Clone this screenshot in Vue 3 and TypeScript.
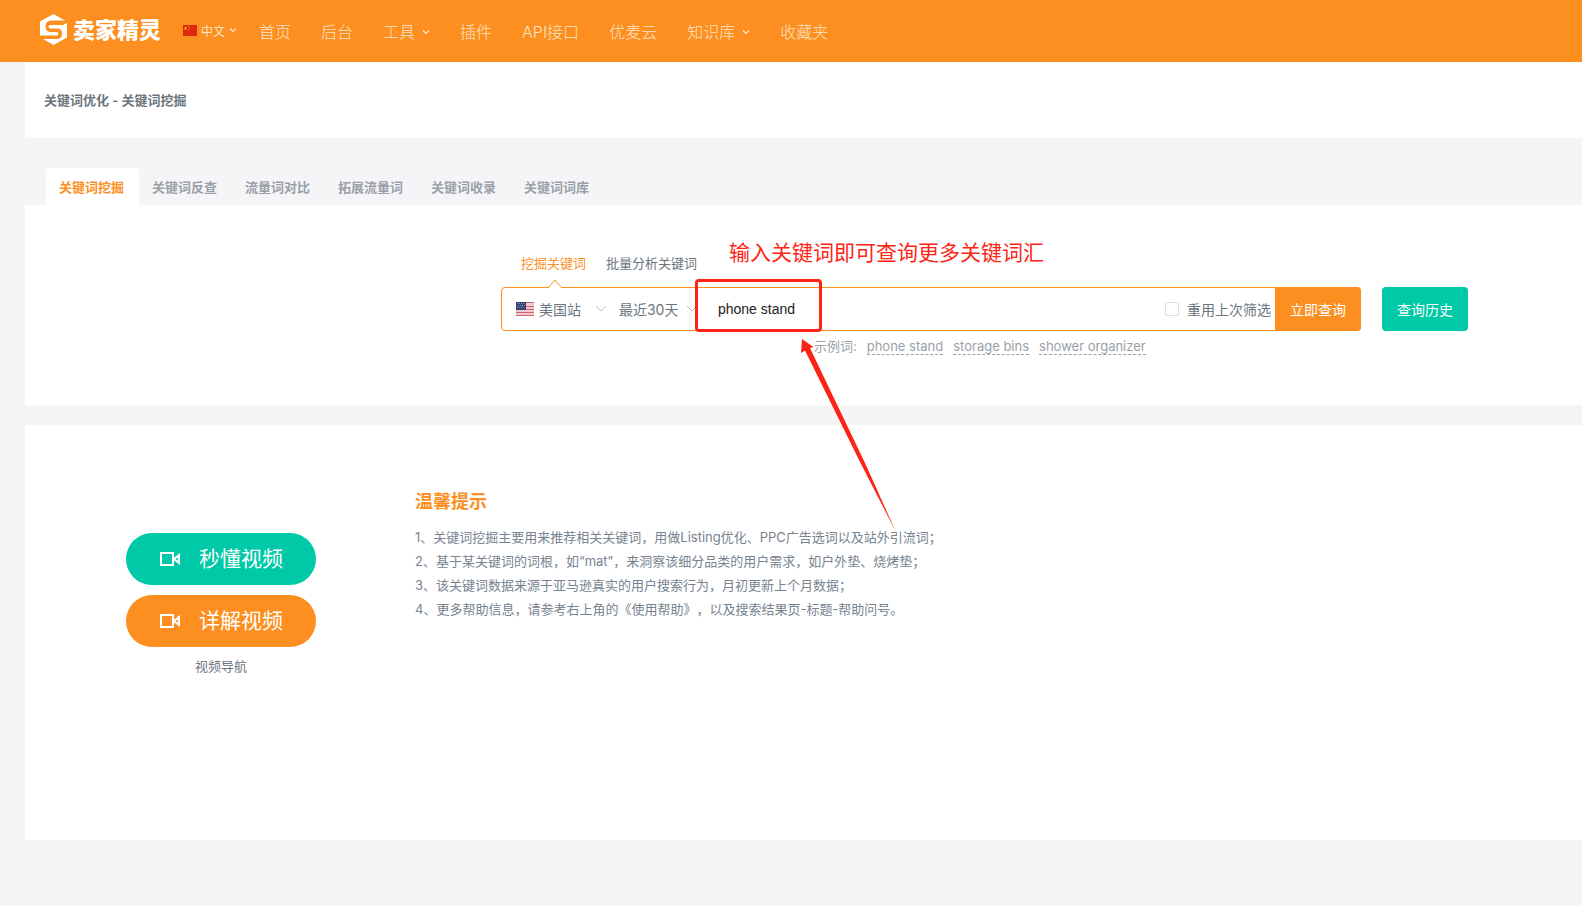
<script setup lang="ts">
import { ref } from 'vue'

interface NavItem {
  label: string
  menu?: boolean
}

const navItems: NavItem[] = [
  { label: '首页' },
  { label: '后台' },
  { label: '工具', menu: true },
  { label: '插件' },
  { label: 'API接口' },
  { label: '优麦云' },
  { label: '知识库', menu: true },
  { label: '收藏夹' },
]

const tabs: string[] = ['关键词挖掘', '关键词反查', '流量词对比', '拓展流量词', '关键词收录', '关键词词库']
const activeTab = ref(0)

const modes: string[] = ['挖掘关键词', '批量分析关键词']
const activeMode = ref(0)

const site = ref('美国站')
const period = ref('最近30天')
const keyword = ref('phone stand')
const reuse = ref(false)

const examples: string[] = ['phone stand', 'storage bins', 'shower organizer']

const tips: string[] = [
  '1、关键词挖掘主要用来推荐相关关键词，用做Listing优化、PPC广告选词以及站外引流词；',
  '2、基于某关键词的词根，如“mat”，来洞察该细分品类的用户需求，如户外垫、烧烤垫；',
  '3、该关键词数据来源于亚马逊真实的用户搜索行为，月初更新上个月数据；',
  '4、更多帮助信息，请参考右上角的《使用帮助》，以及搜索结果页-标题-帮助问号。',
]

const videos = [
  { label: '秒懂视频', tone: 'green' },
  { label: '详解视频', tone: 'orange' },
]
</script>

<template>
  <div class="page">
    <header class="topbar">
      <a class="brand" href="#">
        <svg class="brand-mark" viewBox="0 0 27 31" aria-hidden="true">
          <path d="M13.500 0L25 6.500H12Q5.500 6.500 5.500 12.500T12 18H16.500Q18.500 18 18.500 19.700T16.500 21.500H0V7.500Z" fill="#fff" />
          <path d="M27 9V23.500L13.500 31L3 25H16Q22 25 22 19.500T16 14.500H10.500Q8.500 14.500 8.500 12.700T10.500 11H23Z" fill="#fff" />
        </svg>
        <span class="brand-name">卖家精灵</span>
      </a>
      <button class="lang" type="button">
        <svg class="flag-cn" viewBox="0 0 14 11" aria-hidden="true">
          <rect width="14" height="11" fill="#de2910" />
          <path d="M2.500 1.500l.5 1.200h1.200l-1 .8.4 1.200-1.100-.7-1.100.7.4-1.200-1-.8H2z" fill="#ffde00" />
          <path d="M5 1h1v1H5zM6 2.500h1v1H6zM5 4.500h1v1H5z" fill="#f08a10" />
        </svg>
        <span>中文</span>
        <svg class="caret" viewBox="0 0 8 6" aria-hidden="true"><path d="M1 1.500l3 3 3-3" /></svg>
      </button>
      <nav class="nav">
        <a v-for="item in navItems" :key="item.label" href="#">
          {{ item.label }}
          <svg v-if="item.menu" class="caret" viewBox="0 0 8 6" aria-hidden="true"><path d="M1 1.500l3 3 3-3" /></svg>
        </a>
      </nav>
    </header>

    <main class="content">
      <h1 class="crumb">关键词优化 - 关键词挖掘</h1>

      <div class="tabs" role="tablist">
        <button
          v-for="(tab, i) in tabs"
          :key="tab"
          type="button"
          role="tab"
          :aria-selected="i === activeTab"
          :class="{ active: i === activeTab }"
          @click="activeTab = i"
        >{{ tab }}</button>
      </div>

      <section class="search-panel">
        <div class="modes">
          <button
            v-for="(mode, i) in modes"
            :key="mode"
            type="button"
            :class="{ active: i === activeMode }"
            @click="activeMode = i"
          >{{ mode }}</button>
        </div>
        <form class="search-row" @submit.prevent>
          <div class="search-box">
            <svg class="notch" viewBox="0 0 16 9" aria-hidden="true">
              <path d="M1 9L8 1l7 8" fill="#fff" stroke="#fc8f1f" />
            </svg>
            <svg class="flag-us" viewBox="0 0 18 14" aria-hidden="true">
              <rect width="18" height="14" fill="#f0c9d0" />
              <path d="M0 .5h18M0 4.500h18M0 7.500h18M0 10.500h18M0 13.500h18" stroke="#cf6471" />
              <rect width="10" height="8" fill="#34426f" />
              <path d="M1 1.500h8M2 3.500h8M1 5.500h8" stroke="#8790ae" stroke-dasharray="1 1" />
            </svg>
            <div class="picker site">
              <select v-model="site" aria-label="站点">
                <option>美国站</option>
              </select>
              <svg class="chevron" viewBox="0 0 12 8" aria-hidden="true"><path d="M1 1l5 5 5-5" /></svg>
            </div>
            <div class="picker period">
              <select v-model="period" aria-label="时间">
                <option>最近30天</option>
              </select>
              <svg class="chevron" viewBox="0 0 12 8" aria-hidden="true"><path d="M1 1l5 5 5-5" /></svg>
            </div>
            <input v-model="keyword" class="keyword" type="text" aria-label="关键词" />
            <label class="reuse"><input v-model="reuse" type="checkbox" />重用上次筛选</label>
            <button class="submit" type="submit">立即查询</button>
            <span class="callout-frame" aria-hidden="true"></span>
            <span class="callout-text">输入关键词即可查询更多关键词汇</span>
            <svg class="callout-arrow" viewBox="0 0 96 194" aria-hidden="true">
              <path d="M1 0L12.500 8L9 9L64 124L95 193L58 121L4 11.500L0 14Z" fill="#fd2416" />
            </svg>
          </div>
          <button class="history" type="button">查询历史</button>
        </form>
        <p class="examples">
          <span>示例词:</span>
          <a v-for="word in examples" :key="word" href="#">{{ word }}</a>
        </p>
      </section>

      <section class="help-panel">
        <div class="videos">
          <button v-for="v in videos" :key="v.label" type="button" :class="v.tone">
            <svg class="camera" viewBox="0 0 22 16" aria-hidden="true">
              <path d="M2 2h12v12H2zM15 8l5-4v8z" />
            </svg>
            <span>{{ v.label }}</span>
          </button>
          <p>视频导航</p>
        </div>
        <div class="tips">
          <h2>温馨提示</h2>
          <p v-for="tip in tips" :key="tip">{{ tip }}</p>
        </div>
      </section>
    </main>
  </div>
</template>

<style>
body {
  margin: 0;
  background: #f5f5f8;
}
</style>

<style scoped>
.page {
  min-height: 100vh;
  font-family: Inter, "Noto Sans CJK SC", sans-serif;
  font-size: 13px;
  color: #6c757d;
  background: #f5f5f8;
}

.page * {
  box-sizing: border-box;
}

button,
select,
input {
  margin: 0;
  padding: 0;
  border: 0;
  font: inherit;
  color: inherit;
  background: none;
}

button {
  cursor: pointer;
  white-space: nowrap;
}

a {
  color: inherit;
  text-decoration: none;
}

p,
h1,
h2 {
  margin: 0;
}

.topbar {
  display: flex;
  align-items: center;
  height: 62px;
  padding-left: 40px;
  background: #fc8f1f;
  color: #fff;
}

.brand {
  display: flex;
  align-items: center;
  gap: 6px;
  height: 62px;
  padding-bottom: 3px;
}

.brand-mark {
  width: 27px;
  height: 31px;
}

.brand-name {
  font-size: 22px;
  font-weight: 900;
  line-height: 30px;
}

.lang {
  display: flex;
  align-items: center;
  gap: 4px;
  margin-left: 22px;
  padding-bottom: 2px;
  font-size: 12px;
  color: #ffe3c6;
}

.flag-cn {
  width: 14px;
  height: 11px;
}

.caret {
  width: 8px;
  height: 6px;
  fill: none;
  stroke: currentColor;
  stroke-width: 1.3;
}

.nav {
  display: flex;
  gap: 30px;
  margin-left: 22px;
  padding-bottom: 1px;
  font-size: 16px;
  font-weight: 300;
  color: #ffe3c6;
}

.nav a {
  display: flex;
  align-items: center;
  gap: 7px;
  white-space: nowrap;
}

.nav .caret {
  margin-top: 3px;
}

.content {
  padding-left: 25px;
}

.crumb {
  padding: 28px 19px;
  font-size: 13px;
  font-weight: 600;
  line-height: 20px;
  background: #fff;
}

.tabs {
  display: flex;
  margin-top: 30px;
  padding-left: 21px;
}

.tabs button {
  height: 37px;
  padding: 0 15px 1px 13px;
  border-radius: 3px 3px 0 0;
  font-weight: 600;
  color: #9a9fa8;
}

.tabs .active {
  color: #fc8f1f;
  background: #fff;
}

.search-panel {
  height: 200px;
  padding: 47px 7.32% 0 30.57%;
  background: #fff;
}

.modes {
  display: flex;
  gap: 20px;
  padding-left: 20px;
}

.modes button {
  height: 20px;
}

.modes .active {
  color: #fc8f1f;
}

.search-row {
  display: flex;
  gap: 21px;
  margin-top: 15px;
}

.search-box {
  position: relative;
  display: flex;
  flex: 1;
  align-items: center;
  height: 44px;
  padding-left: 14px;
  border: 1px solid #fc8f1f;
  border-radius: 4px;
  font-size: 14px;
}

.notch {
  position: absolute;
  top: -9px;
  left: 45px;
  width: 16px;
  height: 9px;
}

.flag-us {
  width: 18px;
  height: 14px;
}

.picker {
  display: flex;
  align-items: center;
  justify-content: space-between;
  height: 30px;
}

.picker select {
  appearance: none;
}

.site {
  width: 68px;
  margin-left: 5px;
}

.period {
  width: 79px;
  margin-left: 12px;
}

.chevron {
  flex: none;
  width: 12px;
  height: 8px;
  fill: none;
  stroke: #b9bec8;
}

.keyword {
  flex: 1;
  min-width: 0;
  margin-left: 20px;
  font-family: "Liberation Sans", sans-serif;
  color: #222;
  outline: none;
}

.reuse {
  display: flex;
  align-items: center;
  gap: 8px;
  padding-right: 5px;
  white-space: nowrap;
}

.reuse input {
  appearance: none;
  width: 14px;
  height: 14px;
  border: 1px solid #dcdfe6;
  border-radius: 2px;
}

.submit {
  align-self: stretch;
  width: 86px;
  margin: -1px;
  border-radius: 0 4px 4px 0;
  color: #fff;
  background: #fc8f1f;
}

.history {
  width: 86px;
  height: 44px;
  border-radius: 4px;
  font-size: 14px;
  color: #fff;
  background: #00c9a7;
}

.callout-frame {
  position: absolute;
  top: -9px;
  left: 193px;
  width: 127px;
  height: 53px;
  border: 3px solid #fd2416;
  border-radius: 4px;
}

.callout-text {
  position: absolute;
  top: -50px;
  left: 227px;
  font-size: 21px;
  line-height: 30px;
  color: #fd2416;
  white-space: nowrap;
}

.callout-arrow {
  position: absolute;
  z-index: 1;
  top: 51px;
  left: 299px;
  width: 96px;
  height: 194px;
  pointer-events: none;
}

.examples {
  display: flex;
  gap: 10px;
  margin-top: 7px;
  padding-left: 313px;
  line-height: 16px;
  color: #9a9fa8;
}

.examples a {
  border-bottom: 1px dashed #9a9fa8;
}

.help-panel {
  display: flex;
  height: 415px;
  margin-top: 20px;
  padding-left: 101px;
  background: #fff;
}

.videos {
  display: flex;
  flex-direction: column;
  gap: 10px;
  width: 190px;
  padding-top: 108px;
  line-height: 18px;
  text-align: center;
}

.videos button {
  display: flex;
  align-items: center;
  height: 52px;
  padding-left: 33px;
  border-radius: 26px;
  gap: 18px;
  font-size: 21px;
  color: #fff;
}

.videos .green {
  background: #00c9a7;
}

.videos .orange {
  background: #fc8f1f;
}

.camera {
  width: 22px;
  height: 16px;
  fill: none;
  stroke: #fff;
  stroke-width: 2;
}

.tips {
  margin-left: 99px;
  padding-top: 64px;
  line-height: 24px;
  color: #77838f;
  text-spacing-trim: space-all;
}

.tips h2 {
  margin-bottom: 10px;
  font-size: 18px;
  line-height: 26px;
  color: #fc8f1f;
}
</style>
